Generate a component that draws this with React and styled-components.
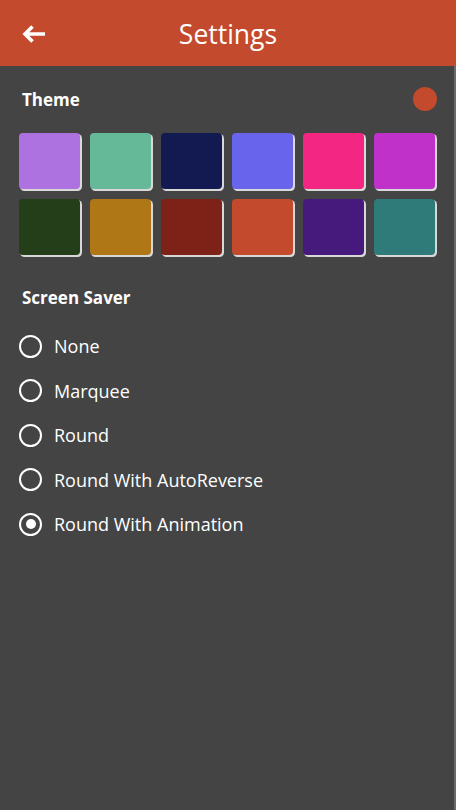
import React, { useState } from "react";
import styled, { createGlobalStyle } from "styled-components";

const GlobalStyle = createGlobalStyle`
  html, body {
    margin: 0;
    padding: 0;
    background: #444444;
  }
  body {
    font-family: "Open Sans", "Noto Sans", sans-serif;
  }
`;

const Page = styled.div`
  width: 456px;
  height: 810px;
  background: #444444;
  color: #fff;
  display: flex;
  flex-direction: column;
  box-sizing: border-box;
  box-shadow: inset -2px 0 0 #6a6a6a;
  overflow: hidden;
`;

const Header = styled.header`
  height: 66px;
  background: #c34a2c;
  display: flex;
  align-items: center;
  justify-content: center;
  position: relative;
  flex-shrink: 0;
`;

const BackButton = styled.button`
  position: absolute;
  left: 20px;
  top: 22px;
  width: 28px;
  height: 24px;
  padding: 0;
  border: none;
  background: transparent;
  cursor: pointer;
  display: flex;
  align-items: center;
  justify-content: center;
`;

const Title = styled.h1`
  margin: 0;
  font-size: 26.5px;
  font-weight: 400;
  color: #fff;
  padding-top: 2px;
`;

const Content = styled.main`
  padding: 19px 19px 0 19px;
  display: flex;
  flex-direction: column;
`;

const SectionHead = styled.div`
  display: flex;
  align-items: center;
  justify-content: space-between;
  height: 28px;
`;

const SectionTitle = styled.h2`
  margin: 0;
  font-size: 17px;
  font-weight: 700;
  padding-left: 3px;
`;

const CurrentDot = styled.span`
  width: 24px;
  height: 24px;
  border-radius: 50%;
  background: ${(p) => p.color};
`;

const Swatches = styled.div`
  display: grid;
  grid-template-columns: repeat(6, 61px);
  grid-auto-rows: 56px;
  column-gap: 10px;
  row-gap: 10px;
  margin-top: 20px;
`;

const Swatch = styled.button`
  border: none;
  padding: 0;
  border-radius: 4px;
  background: ${(p) => p.color};
  box-shadow: 1.5px 1.5px 0 0.5px #d8d8d8;
  cursor: pointer;
`;

const ScreenSaverHead = styled(SectionHead)`
  margin-top: 28px;
`;

const RadioList = styled.div`
  display: flex;
  flex-direction: column;
  margin-top: 13px;
`;

const RadioRow = styled.label`
  display: flex;
  align-items: center;
  height: 44.5px;
  font-size: 18px;
  cursor: pointer;
`;

const RadioCircle = styled.span`
  width: 19px;
  height: 19px;
  border: 2.5px solid #fff;
  border-radius: 50%;
  display: flex;
  align-items: center;
  justify-content: center;
  margin-right: 12px;
  flex-shrink: 0;

  &::after {
    content: "";
    width: 10px;
    height: 10px;
    border-radius: 50%;
    background: #fff;
    display: ${(p) => (p.checked ? "block" : "none")};
  }
`;

const themes = [
  "#ae72e0", "#66b998", "#131a52", "#6864ec", "#f42684", "#bf31c8",
  "#233e18", "#af7716", "#7e2218", "#c34a2c", "#461a7c", "#2e7b7a",
];

const savers = [
  "None",
  "Marquee",
  "Round",
  "Round With AutoReverse",
  "Round With Animation",
];

const App = () => {
  const [theme, setTheme] = useState("#c34a2c");
  const [saver, setSaver] = useState("Round With Animation");

  return (
    <>
      <GlobalStyle />
      <Page>
        <Header>
          <BackButton aria-label="Back">
            <svg width="26" height="20" viewBox="0 0 26 20">
              <path
                d="M24 10H4M11.5 2.5L4 10l7.5 7.5"
                fill="none"
                stroke="#fff"
                strokeWidth="3.6"
              />
            </svg>
          </BackButton>
          <Title>Settings</Title>
        </Header>
        <Content>
          <SectionHead>
            <SectionTitle>Theme</SectionTitle>
            <CurrentDot color={theme} />
          </SectionHead>
          <Swatches>
            {themes.map((c) => (
              <Swatch key={c} color={c} onClick={() => setTheme(c)} />
            ))}
          </Swatches>
          <ScreenSaverHead>
            <SectionTitle>Screen Saver</SectionTitle>
          </ScreenSaverHead>
          <RadioList>
            {savers.map((s) => (
              <RadioRow key={s} onClick={() => setSaver(s)}>
                <RadioCircle checked={saver === s} />
                {s}
              </RadioRow>
            ))}
          </RadioList>
        </Content>
      </Page>
    </>
  );
};

export default App;
